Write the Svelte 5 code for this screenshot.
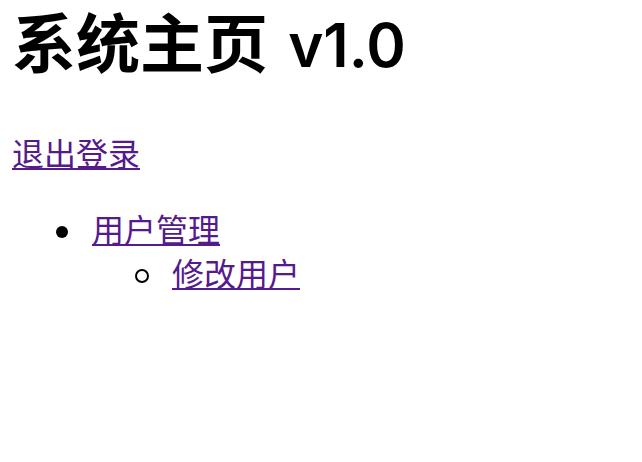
<script>
  const menu = [
    { label: '用户管理', children: [{ label: '修改用户' }] }
  ];
</script>

<main>
  <h1>系统主页 <span class="version">v1.0</span></h1>
  <p><a href="#logout">退出登录</a></p>
  <ul class="menu">
    {#each menu as item}
      <li>
        <a href="#users">{item.label}</a>
        <ul class="submenu">
          {#each item.children as child}
            <li><a href="#edit">{child.label}</a></li>
          {/each}
        </ul>
      </li>
    {/each}
  </ul>
</main>

<style>
  :global(body) {
    margin: 0;
    background: #fff;
  }

  main {
    padding: 0 12px;
    color: #000;
    font-family: Inter, "Noto Sans CJK SC", sans-serif;
    font-size: 32px;
    line-height: 44px;
  }

  h1 {
    margin: 0;
    font-size: 64px;
    font-weight: 600;
    line-height: 88px;
  }

  .version {
    margin-left: 4px;
    font-size: 60px;
  }

  p {
    margin: 44px 0 32px;
  }

  a {
    color: #551a8b;
    text-decoration: underline;
    text-decoration-thickness: 2px;
    text-underline-offset: 2px;
  }

  ul {
    margin: 0;
    padding-left: 80px;
    list-style: none;
  }

  li::before {
    content: "";
    display: inline-block;
    box-sizing: border-box;
    border-radius: 50%;
  }

  .menu > li::before {
    width: 12px;
    height: 12px;
    margin: 0 24px 0 -36px;
    vertical-align: 4px;
    background: #000;
  }

  .submenu > li::before {
    width: 14px;
    height: 14px;
    margin: 0 23px 0 -37px;
    vertical-align: 3px;
    border: 2px solid #000;
    background: none;
  }
</style>
